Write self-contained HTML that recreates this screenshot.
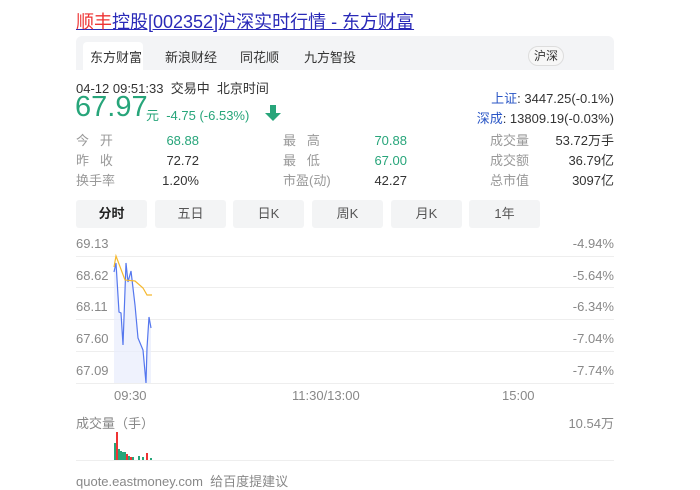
<!DOCTYPE html><html><head><meta charset="utf-8"><style>
body{margin:0;width:700px;height:480px;overflow:hidden;background:#fff;font-family:"Liberation Sans","Noto Sans CJK SC",sans-serif;color:#333;position:relative}
.a{position:absolute;white-space:nowrap}
.t{font-size:13px}.g{color:#999}.gr{color:#27a57a}
.btn{position:absolute;top:200px;width:71px;height:28px;background:#f3f4f5;border-radius:3px;text-align:center;line-height:28px;font-size:13px;color:#555}
.gl{position:absolute;left:76px;width:538px;height:1px;background:#eee}
</style></head><body>
<div class="a" style="left:76px;top:8px;font-size:18px;color:#2a2ab8;text-decoration:underline"><span style="color:#e33">顺丰</span>控股[002352]沪深实时行情 - 东方财富</div>
<div class="a" style="left:76px;top:36px;width:538px;height:34px;background:#f3f4f6;border-radius:6px 6px 0 0"></div>
<div class="a" style="left:83px;top:42px;width:60px;height:28px;background:#fff;border-radius:4px 4px 0 0"></div>
<div class="a t" style="left:90px;top:47px">东方财富</div>
<div class="a t" style="left:165px;top:47px">新浪财经</div>
<div class="a t" style="left:240px;top:47px">同花顺</div>
<div class="a t" style="left:304px;top:47px">九方智投</div>
<div class="a" style="left:528px;top:46px;width:34px;height:18px;border:1px solid #ddd;border-radius:10px;background:#f7f7f7;font-size:12px;text-align:center;line-height:18px">沪深</div>
<div class="a t" style="left:76px;top:78px">04-12 09:51:33 &nbsp;交易中 &nbsp;北京时间</div>
<div class="a gr" style="left:75px;top:91px;font-size:29px">67.97</div>
<div class="a gr t" style="left:146px;top:105px">元 &nbsp;-4.75 (-6.53%)</div>
<svg class="a" style="left:264px;top:104px" width="18" height="18"><path d="M6 1h6v8h5l-8 8-8-8h5z" fill="#27a57a"/></svg>
<div class="a t" style="right:86px;top:89px;text-align:right;line-height:20px"><span style="color:#2a56c6">上证</span>: 3447.25(-0.1%)<br><span style="color:#2a56c6">深成</span>: 13809.19(-0.03%)</div>
<div class="a t g" style="left:76px;top:131px;line-height:20px">今 &nbsp;&nbsp;开<br>昨 &nbsp;&nbsp;收<br>换手率</div>
<div class="a t" style="left:76px;top:131px;width:123px;text-align:right;line-height:20px"><span class="gr">68.88</span><br>72.72<br>1.20%</div>
<div class="a t g" style="left:283px;top:131px;line-height:20px">最 &nbsp;&nbsp;高<br>最 &nbsp;&nbsp;低<br>市盈(动)</div>
<div class="a t" style="left:283px;top:131px;width:124px;text-align:right;line-height:20px"><span class="gr">70.88</span><br><span class="gr">67.00</span><br>42.27</div>
<div class="a t g" style="left:490px;top:131px;line-height:20px">成交量<br>成交额<br>总市值</div>
<div class="a t" style="left:490px;top:131px;width:124px;text-align:right;line-height:20px">53.72万手<br>36.79亿<br>3097亿</div>
<div class="btn" style="left:76px;font-weight:bold;color:#222">分时</div>
<div class="btn" style="left:155px">五日</div>
<div class="btn" style="left:233px">日K</div>
<div class="btn" style="left:312px">周K</div>
<div class="btn" style="left:391px">月K</div>
<div class="btn" style="left:469px">1年</div>
<div class="gl" style="top:256px"></div><div class="gl" style="top:287px"></div><div class="gl" style="top:319px"></div><div class="gl" style="top:351px"></div><div class="gl" style="top:383px"></div><div class="gl" style="top:460px"></div>
<div class="a t g" style="left:76px;top:228px;line-height:31.7px;color:#888">69.13<br>68.62<br>68.11<br>67.60<br>67.09</div>
<div class="a t g" style="right:86px;top:228px;line-height:31.7px;text-align:right;color:#888">-4.94%<br>-5.64%<br>-6.34%<br>-7.04%<br>-7.74%</div>
<svg class="a" style="left:0;top:0" width="700" height="480">
<path d="M114 272L116 263L119 312L121 313L123 345L126 263L128 282L131 271L135 305L138 338L143 350L146 383L147 348L149 317L151 328L151 383L114 383Z" fill="#e8ecfc" opacity=".7"/>
<path d="M114 272L116 263L119 312L121 313L123 345L126 263L128 282L131 271L135 305L138 338L143 350L146 383L147 348L149 317L151 328" fill="none" stroke="#5577ee" stroke-width="1.2"/>
<path d="M114 267L116 256L125 280L135 281L143 288L147 295L152 295" fill="none" stroke="#f5b82e" stroke-width="1.2"/>
<g fill="#27a57a"><rect x="114" y="443" width="2" height="17"/><rect x="118" y="449" width="2" height="11"/><rect x="120" y="451" width="2" height="9"/><rect x="122" y="452" width="2" height="8"/><rect x="124" y="452" width="2" height="8"/><rect x="128" y="456" width="2" height="4"/><rect x="132" y="457" width="2" height="3"/><rect x="138" y="456" width="2" height="4"/><rect x="142" y="457" width="2" height="3"/><rect x="150" y="458" width="2" height="2"/></g>
<g fill="#e33"><rect x="116" y="432" width="2" height="28"/><rect x="126" y="454" width="2" height="6"/><rect x="130" y="457" width="2" height="3"/><rect x="146" y="453" width="2" height="7"/></g>
</svg>
<div class="a t g" style="left:114px;top:388px;color:#888">09:30</div>
<div class="a t g" style="left:292px;top:388px;color:#888">11:30/13:00</div>
<div class="a t g" style="left:502px;top:388px;color:#888">15:00</div>
<div class="a t g" style="left:76px;top:413px;color:#888">成交量（手）</div>
<div class="a t g" style="right:86px;top:413px;color:#888">10.54万</div>
<div class="a t g" style="left:76px;top:471px;color:#888">quote.eastmoney.com &nbsp;给百度提建议</div>
</body></html>
